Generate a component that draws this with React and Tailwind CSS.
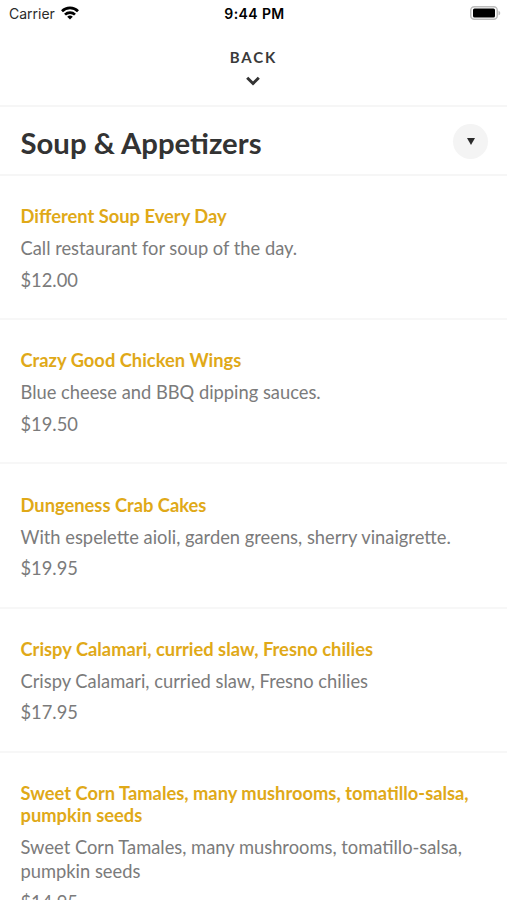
import React, { useState } from 'react';

const menuItems = [
  { id: 1, name: 'Different Soup Every Day', description: 'Call restaurant for soup of the day.', price: '$12.00' },
  { id: 2, name: 'Crazy Good Chicken Wings', description: 'Blue cheese and BBQ dipping sauces.', price: '$19.50' },
  { id: 3, name: 'Dungeness Crab Cakes', description: 'With espelette aioli, garden greens, sherry vinaigrette.', price: '$19.95' },
  { id: 4, name: 'Crispy Calamari, curried slaw, Fresno chilies', description: 'Crispy Calamari, curried slaw, Fresno chilies', price: '$17.95' },
  { id: 5, name: 'Sweet Corn Tamales, many mushrooms, tomatillo-salsa, pumpkin seeds', description: 'Sweet Corn Tamales, many mushrooms, tomatillo-salsa, pumpkin seeds', price: '$14.95' },
];

const StatusBar = () => {
  return (
    <div className="grid h-7 shrink-0 grid-cols-3 items-center pl-[9px] pr-[6px] pb-px font-['Inter',sans-serif] text-[14px] text-black">
      <div className="flex items-center gap-[6px]">
        <span className="text-[#2b2b2b]">Carrier</span>
        <svg className="-mt-[2px]" width="18" height="14" viewBox="0 0 18 14" fill="none" stroke="currentColor" strokeWidth="2.7">
          <path d="M1 5.200a11.300 11.300 0 0 1 16 0" />
          <path d="M4 8.600a7.100 7.100 0 0 1 10 0" />
          <path d="M9 13.600 6.200 10.800a4 4 0 0 1 5.600 0z" fill="currentColor" stroke="none" />
        </svg>
      </div>
      <span className="pr-px text-center font-semibold tracking-[0.4px]">9:44 PM</span>
      <svg className="-mt-px justify-self-end" width="31" height="14" viewBox="0 0 31 14">
        <rect x="0.75" y="0.75" width="26.500" height="12.500" rx="3.500" fill="none" stroke="#bdbdbd" strokeWidth="1.500" />
        <rect x="3" y="2.500" width="22" height="9" rx="1.500" fill="#000" />
        <path d="M28.500 4.700c2.300.9 2.300 3.700 0 4.600z" fill="#bdbdbd" />
      </svg>
    </div>
  );
};

const App = () => {
  const [open, setOpen] = useState(true);

  return (
    <div className="flex h-[900px] w-full flex-col overflow-hidden bg-white font-['Lato',sans-serif]">
      <StatusBar />

      {/* Back */}
      <button className="flex h-[79px] shrink-0 flex-col items-center border-b-2 border-[#f6f6f6] pt-5 text-[#3a3a3a]">
        <span className="text-[15px] font-bold leading-[19px] tracking-[1.9px]">BACK</span>
        <svg className="mt-[9px] mr-px" width="14" height="10" viewBox="0 0 14 10" fill="none" stroke="#333" strokeWidth="3">
          <path d="m1.200 1.800 5.800 5.700 5.800-5.700" />
        </svg>
      </button>

      {/* Section header */}
      <div className="flex h-[69px] shrink-0 items-center justify-between border-b-2 border-[#f6f6f6] pl-[20.5px] pr-[19px]">
        <h1 className="pt-[4px] text-[29.3px] font-bold text-[#333]">Soup &amp; Appetizers</h1>
        <button onClick={() => setOpen(!open)} className="mt-px flex size-[35px] items-center justify-center rounded-full bg-[#f4f4f4]">
          <svg className="mt-px" width="8" height="7" viewBox="0 0 8 7" fill="#2b2b2b">
            <path d="M0 0h8L4 7z" />
          </svg>
        </button>
      </div>

      {/* Menu items */}
      {open && menuItems.map((item) => (
        <div key={item.id} className="shrink-0 border-b-2 border-[#f7f7f7] pt-[29.2px] pr-[30px] pb-[26.4px] pl-[20.5px] text-[18.32px] text-[#7b7b7b]">
          <h2 className="font-bold leading-[22px] text-[#e0a918]">{item.name}</h2>
          <p className="mt-[9px] leading-[24px]">{item.description}</p>
          <p className="mt-[7.6px] leading-[24px]">{item.price}</p>
        </div>
      ))}
    </div>
  );
};

export default App;
